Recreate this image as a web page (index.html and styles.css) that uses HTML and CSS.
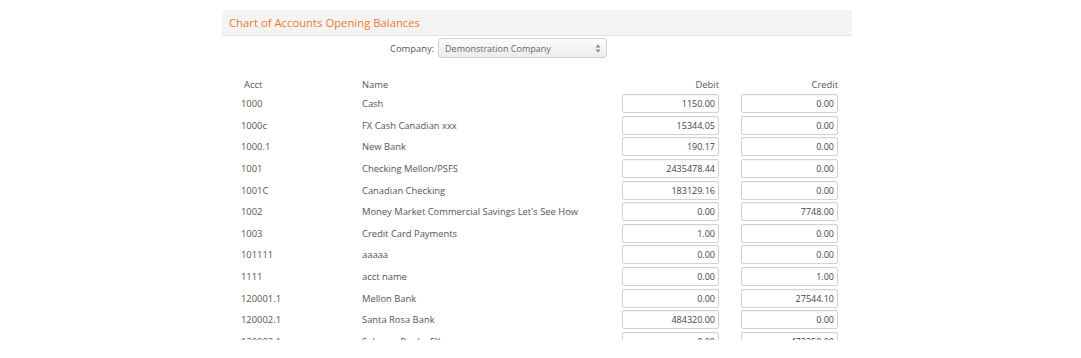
FILE: index.html
```html
<!DOCTYPE html>
<html lang="en">
<head>
    <meta charset="UTF-8">
    <title>Chart of Accounts Opening Balances</title>
    <link rel="stylesheet" href="styles.css">
</head>
<body>
    <div class="panel">
        <div class="panel-title">Chart of Accounts Opening Balances</div>

        <div class="panel-body">
            <div class="company-row">
                <label for="company">Company:</label>
                <div class="select">
                    <span>Demonstration Company</span>
                    <svg width="6" height="9" viewBox="0 0 6 9"><path d="M3 0.5 L5.5 3.5 H0.5 Z M3 8.5 L5.5 5.5 H0.5 Z" fill="#8a8a8a"/></svg>
                </div>
            </div>

            <table class="balances">
                <thead>
                    <tr>
                        <th class="acct">Acct</th>
                        <th class="name">Name</th>
                        <th class="amt">Debit</th>
                        <th class="amt credit">Credit</th>
                    </tr>
                </thead>
                <tbody>
                    <tr><td>1000</td><td>Cash</td><td class="amt"><input value="1150.00"></td><td class="amt credit"><input value="0.00"></td></tr>
                    <tr><td>1000c</td><td>FX Cash Canadian xxx</td><td class="amt"><input value="15344.05"></td><td class="amt credit"><input value="0.00"></td></tr>
                    <tr><td>1000.1</td><td>New Bank</td><td class="amt"><input value="190.17"></td><td class="amt credit"><input value="0.00"></td></tr>
                    <tr><td>1001</td><td>Checking Mellon/PSFS</td><td class="amt"><input value="2435478.44"></td><td class="amt credit"><input value="0.00"></td></tr>
                    <tr><td>1001C</td><td>Canadian Checking</td><td class="amt"><input value="183129.16"></td><td class="amt credit"><input value="0.00"></td></tr>
                    <tr><td>1002</td><td>Money Market Commercial Savings Let's See How</td><td class="amt"><input value="0.00"></td><td class="amt credit"><input value="7748.00"></td></tr>
                    <tr><td>1003</td><td>Credit Card Payments</td><td class="amt"><input value="1.00"></td><td class="amt credit"><input value="0.00"></td></tr>
                    <tr><td>101111</td><td>aaaaa</td><td class="amt"><input value="0.00"></td><td class="amt credit"><input value="0.00"></td></tr>
                    <tr><td>1111</td><td>acct name</td><td class="amt"><input value="0.00"></td><td class="amt credit"><input value="1.00"></td></tr>
                    <tr><td>120001.1</td><td>Mellon Bank</td><td class="amt"><input value="0.00"></td><td class="amt credit"><input value="27544.10"></td></tr>
                    <tr><td>120002.1</td><td>Santa Rosa Bank</td><td class="amt"><input value="484320.00"></td><td class="amt credit"><input value="0.00"></td></tr>
                    <tr><td>120003.1</td><td>Sebnam Bank - FX</td><td class="amt"><input value="0.00"></td><td class="amt credit"><input value="473250.00"></td></tr>
                    <tr><td>1201</td><td>Undeposited Funds</td><td class="amt"><input value="0.00"></td><td class="amt credit"><input value="0.00"></td></tr>
                </tbody>
            </table>
        </div>
    </div>
</body>
</html>
```

FILE: styles.css
```css
body {
    margin: 0;
    padding: 0;
    background: #fff;
    font-family: "Open Sans", "DejaVu Sans", sans-serif;
    font-size: 9.4px;
    color: #555;
}

.panel {
    width: 630px;
    margin: 10px 0 0 222px;
}

.panel-title {
    height: 25px;
    line-height: 25px;
    padding-left: 7px;
    background-color: #f4f4f4;
    border-bottom: 1px solid #e4e4e4;
    color: #f07a2b;
    font-size: 11.3px;
}

/* rows below the visible area are clipped, like the scrolled original */
.panel-body {
    height: 304px;
    overflow: hidden;
}

.company-row {
    display: flex;
    align-items: center;
    gap: 4px;
    margin: 2px 0 0 168px;
}

.select {
    width: 169px;
    height: 20px;
    display: flex;
    align-items: center;
    justify-content: space-between;
    padding: 0 5px 0 6px;
    border: 1px solid #cfcfcf;
    border-radius: 3px;
    background: linear-gradient(#fdfdfd, #ececec);
    color: #666;
    font-size: 9px;
    box-sizing: border-box;
}

.balances {
    border-collapse: collapse;
    margin: 17px 0 0 19px;
}

.balances th {
    height: 18px;
    padding: 0;
    font-weight: normal;
    text-align: left;
    color: #555;
}

.balances td {
    height: 21.6px;
    padding: 0;
    white-space: nowrap;
}

.balances td:first-child {
    width: 121px;
}

.balances th.acct {
    width: 118px;
    padding-left: 3px;
}

.balances td:nth-child(2),
.balances th:nth-child(2) {
    width: 260px;
}

.balances .amt {
    width: 97px;
    text-align: right;
}

.balances .credit {
    padding-left: 22px;
}

.balances input {
    display: block;
    width: 97px;
    height: 19px;
    box-sizing: border-box;
    padding: 0 3px 0 0;
    border: 1px solid #d2d2d2;
    border-radius: 2px;
    box-shadow: inset 0 1px 1px rgba(0, 0, 0, 0.04);
    font-family: "Open Sans", "DejaVu Sans", sans-serif;
    font-size: 9px;
    color: #444;
    text-align: right;
    background: #fff;
}
```
